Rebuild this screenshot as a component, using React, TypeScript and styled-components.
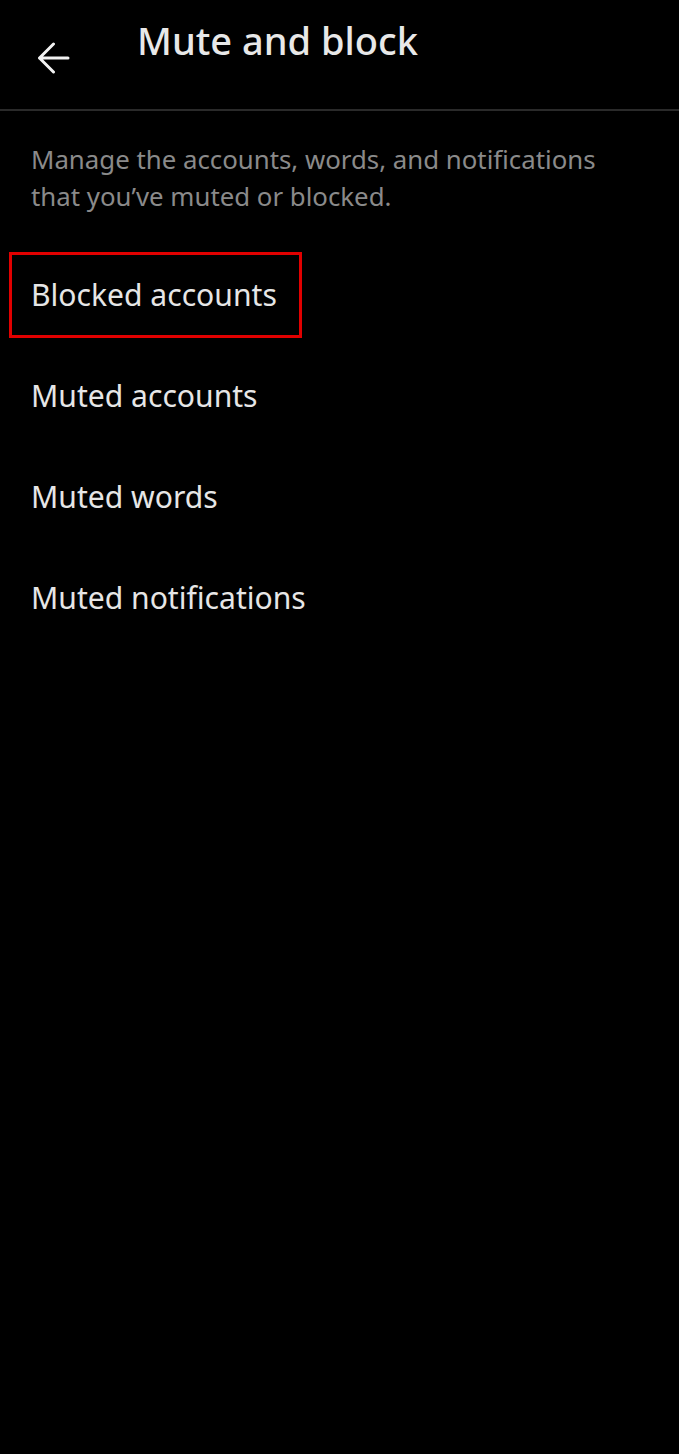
import { createGlobalStyle } from 'styled-components';
import styled from 'styled-components';

const GlobalStyle = createGlobalStyle`
  html, body {
    margin: 0;
    padding: 0;
    background: #000000;
  }
  body {
    font-family: 'Noto Sans', Roboto, sans-serif;
    -webkit-font-smoothing: antialiased;
  }
`;

const Screen = styled.div`
  width: 679px;
  min-height: 1454px;
  background: #000000;
  display: flex;
  flex-direction: column;
`;

const TopBar = styled.header`
  height: 109px;
  display: flex;
  align-items: flex-start;
  border-bottom: 2px solid #2a2a2a;
`;

const BackButton = styled.button`
  width: 106px;
  padding: 42px 0 0 37px;
  margin: 0;
  border: none;
  background: transparent;
  display: flex;
  align-items: flex-start;
  color: #f2f2f2;
  cursor: pointer;
`;

const Title = styled.h1`
  margin: 15px 0 0 31px;
  font-size: 38px;
  line-height: 50px;
  font-weight: 500;
  color: #e8e8e8;
`;

const Content = styled.main`
  display: flex;
  flex-direction: column;
  padding: 30px 31px 0 31px;
`;

const Description = styled.p`
  margin: 0 0 29px 0;
  font-size: 25.8px;
  line-height: 37px;
  color: #8a8a8a;
  max-width: 610px;
`;

const MenuList = styled.ul`
  list-style: none;
  margin: 0;
  padding: 0;
  display: flex;
  flex-direction: column;
`;

const MenuItem = styled.li<{ $highlighted?: boolean }>`
  height: 101px;
  display: flex;
  align-items: center;
  font-size: 30.1px;
  color: #e6e6e6;
  ${(p) => (p.$highlighted ? 'align-self: flex-start;' : '')}
`;

const Highlight = styled.span`
  display: inline-flex;
  align-items: center;
  height: 80px;
  margin-left: -22px;
  padding: 0 22px 0 19px;
  border: 3px solid #e10000;
`;

const items = ['Blocked accounts', 'Muted accounts', 'Muted words', 'Muted notifications'];

export default function App() {
  return (
    <>
      <GlobalStyle />
      <Screen>
        <TopBar>
          <BackButton aria-label="Back">
            <svg width="33" height="32" viewBox="0 0 33 32" fill="none">
              <path
                d="M31 16H2.5M16.5 2L2.5 16 16.5 30"
                stroke="currentColor"
                strokeWidth="3"
                strokeLinecap="round"
                strokeLinejoin="round"
              />
            </svg>
          </BackButton>
          <Title>Mute and block</Title>
        </TopBar>
        <Content>
          <Description>
            Manage the accounts, words, and notifications that you’ve muted or blocked.
          </Description>
          <MenuList>
            {items.map((label, i) => (
              <MenuItem key={label} $highlighted={i === 0}>
                {i === 0 ? <Highlight>{label}</Highlight> : label}
              </MenuItem>
            ))}
          </MenuList>
        </Content>
      </Screen>
    </>
  );
}
